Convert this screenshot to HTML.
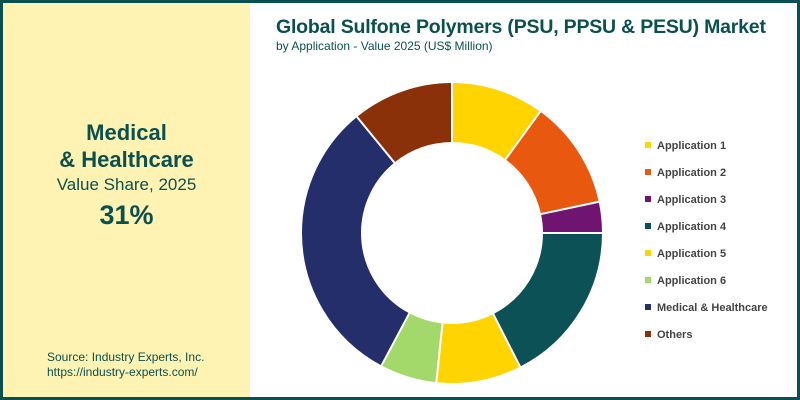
<!DOCTYPE html>
<html><head><style>
body{margin:0;width:800px;height:400px;overflow:hidden;font-family:"Liberation Sans",sans-serif}
.f{position:absolute;left:0;top:0;width:794px;height:394px;border:3px solid #0b5050;background:#fff}
.l{position:absolute;left:0;top:0;width:247px;height:394px;background:#fef3b3;color:#0b5050}
.c{position:absolute;width:247px;text-align:center}
.t{position:absolute;color:#0b5050;white-space:nowrap}
.lg{position:absolute;left:642px;font-size:11px;font-weight:bold;color:#444;white-space:nowrap}
.lg i{display:inline-block;width:6px;height:6px;margin-right:6px;vertical-align:1px}
</style></head><body>
<div class="f">
<div class="l">
<div class="c" style="top:117px;font-size:22px;font-weight:bold">Medical</div>
<div class="c" style="top:144px;font-size:22px;font-weight:bold">&amp; Healthcare</div>
<div class="c" style="top:172px;font-size:17px">Value Share, 2025</div>
<div class="c" style="top:197px;font-size:27px;font-weight:bold">31%</div>
<div style="position:absolute;left:44px;top:347px;font-size:12px;line-height:15px">Source: Industry Experts, Inc.<br>https://industry-experts.com/</div>
</div>
<div class="t" style="left:273px;top:13px;font-size:19.5px;font-weight:bold;letter-spacing:-0.2px">Global Sulfone Polymers (PSU, PPSU &amp; PESU) Market</div>
<div class="t" style="left:273px;top:36px;font-size:12px">by Application - Value 2025 (US$ Million)</div>
<svg style="position:absolute;left:0;top:0" width="794" height="394">
<g transform="translate(449,230) rotate(-90)" fill="none" stroke-width="59">
<circle r="120.5" stroke="#ffd400" stroke-dasharray="75.7 800" stroke-dashoffset="0"/>
<circle r="120.5" stroke="#e8580f" stroke-dasharray="88.3 800" stroke-dashoffset="-75.7"/>
<circle r="120.5" stroke="#6f1470" stroke-dasharray="25.2 800" stroke-dashoffset="-164"/>
<circle r="120.5" stroke="#0b5156" stroke-dasharray="132.5 800" stroke-dashoffset="-189.2"/>
<circle r="120.5" stroke="#ffd400" stroke-dasharray="69.4 800" stroke-dashoffset="-321.7"/>
<circle r="120.5" stroke="#a3d96a" stroke-dasharray="46.3 800" stroke-dashoffset="-391.1"/>
<circle r="120.5" stroke="#232e6b" stroke-dasharray="237 800" stroke-dashoffset="-437.4"/>
<circle r="120.5" stroke="#8b3109" stroke-dasharray="82.7 800" stroke-dashoffset="-674.4"/>
</g>
<g transform="translate(449,230)" stroke="#fff" stroke-width="2">
<line x1="0" y1="-88" x2="0" y2="-152"/>
<line x1="0" y1="-88" x2="0" y2="-152" transform="rotate(36)"/>
<line x1="0" y1="-88" x2="0" y2="-152" transform="rotate(78)"/>
<line x1="0" y1="-88" x2="0" y2="-152" transform="rotate(90)"/>
<line x1="0" y1="-88" x2="0" y2="-152" transform="rotate(153)"/>
<line x1="0" y1="-88" x2="0" y2="-152" transform="rotate(186)"/>
<line x1="0" y1="-88" x2="0" y2="-152" transform="rotate(208)"/>
<line x1="0" y1="-88" x2="0" y2="-152" transform="rotate(320.7)"/>
</g>
</svg>
<div class="lg" style="top:137px"><i style="background:#ffd400"></i>Application 1</div>
<div class="lg" style="top:164px"><i style="background:#e8580f"></i>Application 2</div>
<div class="lg" style="top:191px"><i style="background:#6f1470"></i>Application 3</div>
<div class="lg" style="top:218px"><i style="background:#0b5156"></i>Application 4</div>
<div class="lg" style="top:245px"><i style="background:#ffd400"></i>Application 5</div>
<div class="lg" style="top:272px"><i style="background:#a3d96a"></i>Application 6</div>
<div class="lg" style="top:299px"><i style="background:#232e6b"></i>Medical &amp; Healthcare</div>
<div class="lg" style="top:326px"><i style="background:#8b3109"></i>Others</div>
</div>
</body></html>
